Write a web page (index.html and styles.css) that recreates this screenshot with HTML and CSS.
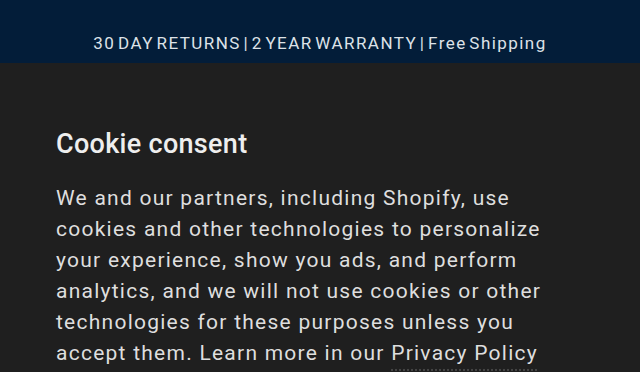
FILE: index.html
```html
<!DOCTYPE html>
<html lang="en">
  <head>
    <meta charset="UTF-8" />
    <title>Cookie consent</title>
    <link rel="stylesheet" href="styles.css">
  </head>
  <body>
    <!-- announcement bar -->
    <div class="announce">
      <p>30 DAY RETURNS | 2 YEAR WARRANTY | Free Shipping</p>
    </div>

    <!-- cookie banner -->
    <section class="consent">
      <h2>Cookie consent</h2>
      <p>
        We and our partners, including Shopify, use cookies and other technologies to personalize
        your experience, show you ads, and perform analytics, and we will not use cookies or other
        technologies for these purposes unless you accept them. Learn more in our
        <a href="#">Privacy Policy</a>
      </p>
    </section>
  </body>
</html>
```

FILE: styles.css
```css
* {
  box-sizing: border-box;
  margin: 0;
  padding: 0;
}
html,
body {
  height: 100%;
  overflow: hidden;
}
body {
  font-family: Roboto, "Liberation Sans", sans-serif;
  background-color: #1f1f1f;
  color: #e2e2e2;
}
.announce {
  height: 63px;
  padding-top: 32px;
  background-color: #031d39;
  text-align: center;
}
.announce p {
  font-size: 17px;
  line-height: 22px;
  color: #dde2e8;
  letter-spacing: 1.45px;
  word-spacing: -3px;
}
.consent {
  padding: 64px 56px 0;
}
.consent h2 {
  font-size: 27px;
  font-weight: 500;
  line-height: 34px;
  letter-spacing: 0.3px;
  color: #eeeeee;
  margin-bottom: 22px;
}
.consent p {
  width: 510px;
  font-size: 21px;
  line-height: 31px;
  letter-spacing: 1.25px;
  color: #dedede;
}
.consent a {
  color: inherit;
  text-decoration: underline dotted;
  text-decoration-color: #444;
  text-underline-offset: 9px;
}
```
